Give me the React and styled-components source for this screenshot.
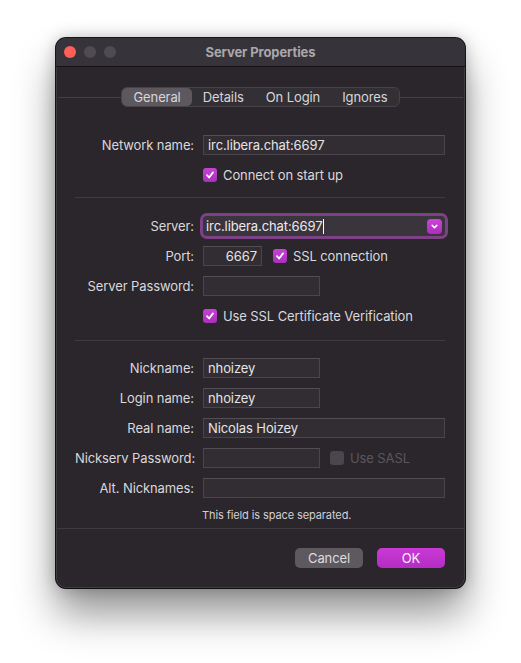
import React from "react";
import styled, { createGlobalStyle } from "styled-components";

const Global = createGlobalStyle`
  body {
    margin: 0;
    background: #ffffff;
    font-family: Inter, "Liberation Sans", sans-serif;
  }
`;

const Page = styled.div`
  padding: 38px 0 0 56px;
  height: 663px;
  box-sizing: border-box;
`;

const Window = styled.div`
  width: 409px;
  height: 550px;
  box-sizing: border-box;
  border-radius: 10px;
  overflow: hidden;
  background: #2a262b;
  box-shadow: 0 0 0 1px rgba(0, 0, 0, 0.9), inset 0 0 0 1px rgba(255, 255, 255, 0.1),
    0 26px 40px rgba(0, 0, 0, 0.42), 0 0 16px rgba(0, 0, 0, 0.25);
  display: flex;
  flex-direction: column;
  color: #dcdcdc;
  font-size: 13px;
  letter-spacing: -0.1px;
`;

const TitleBar = styled.div`
  height: 28px;
  flex: none;
  background: #37333a;
  border-bottom: 1px solid #141215;
  display: grid;
  grid-template-columns: 1fr auto 1fr;
  align-items: center;
  padding: 0 8px;
`;

const Lights = styled.div`
  display: flex;
  gap: 8px;
`;

const Light = styled.span`
  width: 12px;
  height: 12px;
  border-radius: 50%;
  background: ${(p) => p.$color};
`;

const Title = styled.div`
  font-weight: 700;
  color: #a9a7ab;
  font-size: 13px;
`;

const TabStrip = styled.div`
  position: relative;
  display: flex;
  justify-content: center;
  margin-top: 20px;
  &::before {
    content: "";
    position: absolute;
    left: 2px;
    right: 2px;
    top: 10px;
    height: 1px;
    background: #433f45;
  }
`;

const Segmented = styled.div`
  position: relative;
  display: flex;
  height: 20px;
  box-sizing: border-box;
  background: #333035;
  border: 1px solid #464248;
  border-radius: 6px;
`;

const Segment = styled.div`
  display: flex;
  align-items: center;
  padding: 0 11px;
  border-radius: 5px;
  color: #d8d6da;
  background: ${(p) => (p.$active ? "#5c585e" : "transparent")};
`;

const Form = styled.div`
  padding: 28px 20px 6px 19px;
  border-bottom: 1px solid #3e3a40;
`;

const Section = styled.div`
  display: flex;
  flex-direction: column;
  gap: 10px;
`;

const Divider = styled.div`
  height: 1px;
  background: #3e3a40;
  margin: ${(p) => p.$m};
`;

const Row = styled.div`
  display: grid;
  grid-template-columns: 119px 1fr;
  column-gap: 9px;
  align-items: center;
  height: 20px;
`;

const Label = styled.div`
  text-align: right;
  white-space: nowrap;
  color: #dad8dc;
`;

const Field = styled.div`
  display: flex;
  align-items: center;
`;

const Input = styled.div`
  width: ${(p) => p.$w || "100%"};
  height: 20px;
  box-sizing: border-box;
  background: #312d32;
  border: 1px solid #49454b;
  border-top-color: #524e54;
  color: #e6e4e8;
  padding: 0 4px;
  display: flex;
  align-items: center;
  justify-content: ${(p) => (p.$right ? "flex-end" : "flex-start")};
  white-space: nowrap;
`;

const Combo = styled.div`
  width: 100%;
  height: 20px;
  box-sizing: border-box;
  background: #3a353c;
  border-radius: 4px;
  box-shadow: 0 0 0 3px rgba(176, 82, 190, 0.62);
  display: flex;
  align-items: center;
  padding: 0 3px;
  color: #eceaee;
`;

const Caret = styled.span`
  width: 1px;
  height: 15px;
  background: #ffffff;
  margin-left: 1px;
`;

const DropButton = styled.div`
  margin-left: auto;
  width: 15px;
  height: 15px;
  border-radius: 4px;
  background: linear-gradient(#cc44d8, #ad2dbd);
  display: flex;
  align-items: center;
  justify-content: center;
`;

const Check = styled.label`
  display: flex;
  align-items: center;
  gap: 6px;
  margin-left: ${(p) => p.$ml || "0"};
  color: ${(p) => (p.$disabled ? "#5a565c" : "#dad8dc")};
  white-space: nowrap;
`;

const Box = styled.span`
  width: 14px;
  height: 14px;
  border-radius: 3px;
  flex: none;
  display: flex;
  align-items: center;
  justify-content: center;
  background: ${(p) => (p.$on ? "linear-gradient(#c643d4, #a92fba)" : "#4a464c")};
`;

const Note = styled.div`
  margin: 10px 0 0 127px;
  font-size: 11px;
  line-height: 14px;
  color: #d2d0d4;
`;

const ButtonBar = styled.div`
  display: flex;
  justify-content: flex-end;
  gap: 14px;
  padding: 19px 20px 0 0;
`;

const Button = styled.div`
  width: 68px;
  height: 20px;
  border-radius: 5px;
  display: flex;
  align-items: center;
  justify-content: center;
  color: ${(p) => (p.$primary ? "#f4eef6" : "#dedcdf")};
  background: ${(p) =>
    p.$primary ? "linear-gradient(#c93ad6, #b52cc3)" : "#5d595f"};
`;

const Tick = () => (
  <svg width="10" height="10" viewBox="0 0 10 10">
    <path d="M2 5.2 L4.1 7.5 L8 2.4" fill="none" stroke="#fff" strokeWidth="1.8" strokeLinecap="round" strokeLinejoin="round" />
  </svg>
);

const Checkbox = ({ on, disabled, children, ml }) => (
  <Check $disabled={disabled} $ml={ml}>
    <Box $on={on}>{on && <Tick />}</Box>
    {children}
  </Check>
);

export default function App() {
  return (
    <Page>
      <Global />
      <Window>
        <TitleBar>
          <Lights>
            <Light $color="#fe5f57" />
            <Light $color="#4f4b51" />
            <Light $color="#4f4b51" />
          </Lights>
          <Title>Server Properties</Title>
          <div />
        </TitleBar>

        <TabStrip>
          <Segmented>
            <Segment $active>General</Segment>
            <Segment>Details</Segment>
            <Segment>On Login</Segment>
            <Segment>Ignores</Segment>
          </Segmented>
        </TabStrip>

        <Form>
          <Section>
            <Row>
              <Label>Network name:</Label>
              <Input>irc.libera.chat:6697</Input>
            </Row>
            <Row>
              <div />
              <Field>
                <Checkbox on>Connect on start up</Checkbox>
              </Field>
            </Row>
          </Section>

          <Divider $m="12px 0 18px" />

          <Section>
            <Row>
              <Label>Server:</Label>
              <Combo>
                irc.libera.chat:6697
                <Caret />
                <DropButton>
                  <svg width="9" height="9" viewBox="0 0 9 9">
                    <path d="M2.2 3.4 L4.5 5.7 L6.8 3.4" fill="none" stroke="#fff" strokeWidth="1.5" strokeLinecap="round" strokeLinejoin="round" />
                  </svg>
                </DropButton>
              </Combo>
            </Row>
            <Row>
              <Label>Port:</Label>
              <Field>
                <Input $w="59px" $right>6667</Input>
                <Checkbox on ml="11px">SSL connection</Checkbox>
              </Field>
            </Row>
            <Row>
              <Label>Server Password:</Label>
              <Field>
                <Input $w="117px" />
              </Field>
            </Row>
            <Row>
              <div />
              <Field>
                <Checkbox on>Use SSL Certificate Verification</Checkbox>
              </Field>
            </Row>
          </Section>

          <Divider $m="14px 0 17px" />

          <Section>
            <Row>
              <Label>Nickname:</Label>
              <Field>
                <Input $w="117px">nhoizey</Input>
              </Field>
            </Row>
            <Row>
              <Label>Login name:</Label>
              <Field>
                <Input $w="117px">nhoizey</Input>
              </Field>
            </Row>
            <Row>
              <Label>Real name:</Label>
              <Input>Nicolas Hoizey</Input>
            </Row>
            <Row>
              <Label>Nickserv Password:</Label>
              <Field>
                <Input $w="117px" />
                <Checkbox disabled ml="10px">Use SASL</Checkbox>
              </Field>
            </Row>
            <Row>
              <Label>Alt. Nicknames:</Label>
              <Input />
            </Row>
          </Section>
          <Note>This field is space separated.</Note>
        </Form>

        <ButtonBar>
          <Button>Cancel</Button>
          <Button $primary>OK</Button>
        </ButtonBar>
      </Window>
    </Page>
  );
}
